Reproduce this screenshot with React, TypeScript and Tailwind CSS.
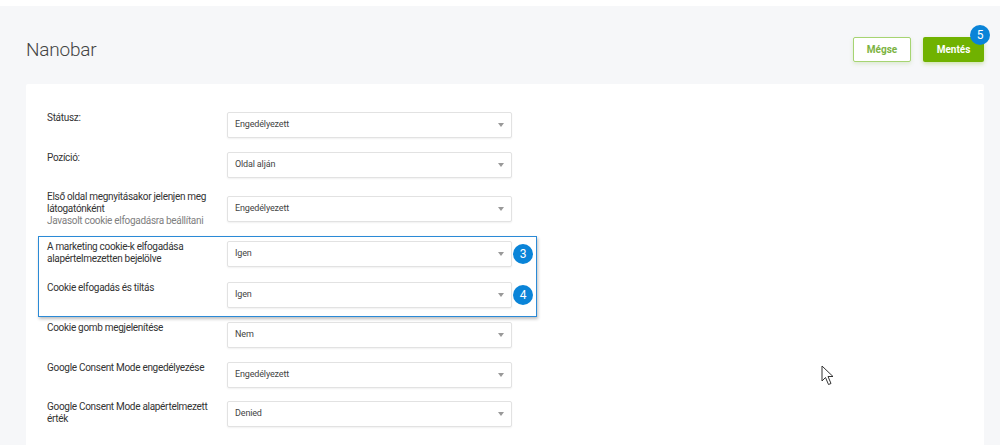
import type { ReactNode } from 'react';

type Row = {
  label: ReactNode;
  value: string;
};

const font = { fontFamily: 'Roboto, "Liberation Sans", sans-serif' };

function Badge({ n }: { n: number }) {
  return (
    <span className="flex h-[20px] w-[20px] items-center justify-center rounded-full bg-[#0a84d8] text-[12px] leading-none text-white">
      {n}
    </span>
  );
}

function Select({ value }: { value: string }) {
  return (
    <div className="flex h-[26px] w-[285px] items-center justify-between rounded-[2px] border border-[#e2e2e2] bg-white pl-[7px] pr-[7px] text-[9px] tracking-[-0.15px] text-[#444] shadow-[0_1px_2px_rgba(0,0,0,0.06)]">
      <span>{value}</span>
      <svg width="6" height="4" viewBox="0 0 6 4">
        <path d="M0 0H6L3 4Z" fill="#999" />
      </svg>
    </div>
  );
}

function FormRow({ row, badge }: { row: Row; badge?: number }) {
  return (
    <div className="relative flex items-start">
      <div className="w-[180px] text-[10px] leading-[12px] tracking-[-0.3px] text-[#333]">
        {row.label}
      </div>
      <div className="self-center">
        <Select value={row.value} />
      </div>
      {badge && (
        <div className="absolute left-[466px] top-1/2 -translate-y-1/2">
          <Badge n={badge} />
        </div>
      )}
    </div>
  );
}

const topRows: Row[] = [
  { label: 'Státusz:', value: 'Engedélyezett' },
  { label: 'Pozíció:', value: 'Oldal alján' },
  {
    label: (
      <>
        Első oldal megnyitásakor jelenjen meg látogatónként
        <span className="block text-[#808080]">Javasolt cookie elfogadásra beállítani</span>
      </>
    ),
    value: 'Engedélyezett',
  },
];

const markedRows: Row[] = [
  { label: 'A marketing cookie-k elfogadása alapértelmezetten bejelölve', value: 'Igen' },
  { label: 'Cookie elfogadás és tiltás', value: 'Igen' },
];

const bottomRows: Row[] = [
  { label: 'Cookie gomb megjelenítése', value: 'Nem' },
  { label: 'Google Consent Mode engedélyezése', value: 'Engedélyezett' },
  { label: 'Google Consent Mode alapértelmezett érték', value: 'Denied' },
];

export default function App() {
  return (
    <div className="relative h-[445px] overflow-hidden bg-white" style={font}>
      <div className="mt-[6px] h-full bg-[#f6f7f9] pl-[26px] pr-[16px]">
        <div className="flex items-center justify-between pt-[31px]">
          <h1 className="text-[19px] font-light leading-none tracking-[-0.2px] text-[#444]">Nanobar</h1>
          <div className="flex gap-[12px]">
            <button className="h-[25px] w-[58px] rounded-[2px] border border-[#a6d472] bg-white text-[10px] font-bold text-[#7cb342] shadow-[0_2px_4px_rgba(124,179,66,0.2)]">
              Mégse
            </button>
            <div className="relative flex">
              <button className="h-[25px] w-[61px] rounded-[2px] bg-[#70b200] text-[10px] font-bold text-white shadow-[0_2px_4px_rgba(112,178,0,0.3)]">
                Mentés
              </button>
              <div className="absolute right-[-6px] top-[-12px]">
                <Badge n={5} />
              </div>
            </div>
          </div>
        </div>

        <div className="mt-[22px] h-[400px] rounded-[2px] bg-white pl-[21px] pt-[28px]">
          <div className="flex w-[465px] flex-col gap-[13.5px]">
            {topRows.map((r, i) => (
              <FormRow key={i} row={r} />
            ))}
            <div className="relative my-[0.5px] flex flex-col gap-[15px]">
              <div className="pointer-events-none absolute -bottom-[9px] -left-[9px] -top-[5px] right-[-25px] border-[1.5px] border-[#2b8ad6] shadow-[1px_2px_3px_rgba(0,0,0,0.25)]" />
              {markedRows.map((r, i) => (
                <FormRow key={i} row={r} badge={i + 3} />
              ))}
            </div>
            {bottomRows.map((r, i) => (
              <FormRow key={i} row={r} />
            ))}
          </div>
        </div>
      </div>

      <svg
        className="absolute left-[821px] top-[365px]"
        width="16"
        height="22"
        viewBox="0 0 16 22"
      >
        <path
          d="M1 1V16L4.5 12.5L7.5 19.5L10 18.5L7 11.5H12Z"
          fill="white"
          stroke="#333"
          strokeWidth="1"
          strokeLinejoin="round"
        />
      </svg>
    </div>
  );
}
